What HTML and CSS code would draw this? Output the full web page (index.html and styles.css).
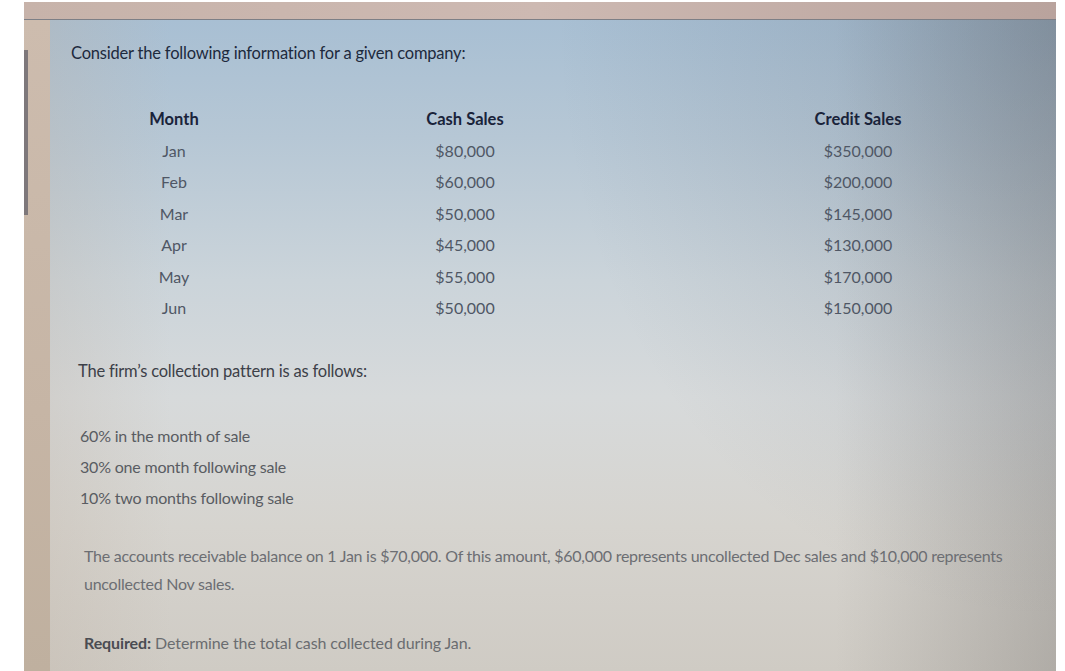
FILE: index.html
```html
<!DOCTYPE html>
<html>
<head>
<meta charset="utf-8">
<link rel="stylesheet" href="styles.css">
</head>
<body>
<div class="photo">
  <div class="bezel-top"></div>
  <div class="body-row">
    <div class="bezel-left"><div class="edge"></div></div>
    <div class="screen">
      <p class="title">Consider the following information for a given company:</p>
      <div class="table">
        <div class="th">Month</div><div class="th">Cash Sales</div><div class="th">Credit Sales</div>
        <div class="td">Jan</div><div class="td">$80,000</div><div class="td">$350,000</div>
        <div class="td">Feb</div><div class="td">$60,000</div><div class="td">$200,000</div>
        <div class="td">Mar</div><div class="td">$50,000</div><div class="td">$145,000</div>
        <div class="td">Apr</div><div class="td">$45,000</div><div class="td">$130,000</div>
        <div class="td">May</div><div class="td">$55,000</div><div class="td">$170,000</div>
        <div class="td">Jun</div><div class="td">$50,000</div><div class="td">$150,000</div>
      </div>
      <p class="pattern">The firm’s collection pattern is as follows:</p>
      <ul class="pct">
        <li>60% in the month of sale</li>
        <li>30% one month following sale</li>
        <li>10% two months following sale</li>
      </ul>
      <p class="ar">The accounts receivable balance on 1 Jan is $70,000. Of this amount, $60,000 represents uncollected Dec sales and $10,000 represents uncollected Nov sales.</p>
      <p class="req"><b>Required:</b> Determine the total cash collected during Jan.</p>
    </div>
  </div>
</div>
</body>
</html>
```

FILE: styles.css
```css
html, body {
  margin: 0;
  padding: 0;
  background: #ffffff;
}
body {
  font-family: Lato, "Open Sans", sans-serif;
}
.photo {
  margin: 2px 0 0 24px;
  width: 1032px;
  height: 669px;
  display: flex;
  flex-direction: column;
  overflow: hidden;
}
.bezel-top {
  height: 17px;
  flex: none;
  background: linear-gradient(to right, #c7b3aa, #cdb9b2 50%, #b9a39d);
  border-bottom: 1px solid #7d7f86;
}
.body-row {
  flex: 1;
  display: flex;
  min-height: 0;
}
.bezel-left {
  width: 26px;
  flex: none;
  background: linear-gradient(to bottom, #cdbcae, #c6b5a5 60%, #bfb09f);
  padding-top: 30px;
}
.edge {
  width: 4px;
  height: 165px;
  background: #7e787b;
}
.screen {
  flex: 1;
  padding: 23px 0 0 21px;
  background:
    radial-gradient(ellipse 500px 600px at 100% 0%, rgba(80,90,105,0.28), rgba(80,90,105,0.12) 45%, rgba(80,90,105,0) 100%),
    linear-gradient(to right, rgba(0,0,0,0) 78%, rgba(95,92,90,0.28) 100%),
    linear-gradient(to right, rgba(190,175,160,0.25) 0%, rgba(0,0,0,0) 12%),
    linear-gradient(to bottom, #a8bfd3 0%, #b6c7d5 18%, #cbd4da 40%, #d7dadb 58%, #d6d4cf 78%, #cfcbc4 100%);
}
p { margin: 0; }
.title {
  font-size: 16.5px;
  line-height: 20px;
  color: #1d2a3d;
  letter-spacing: -0.2px;
}
.table {
  display: grid;
  grid-template-columns: 148px 434px 352px;
  grid-template-rows: 33px;
  grid-auto-rows: 31.4px;
  margin: 39px 0 0 29px;
  text-align: center;
  align-items: start;
}
.th {
  font-weight: 700;
  font-size: 16.5px;
  line-height: 34px;
  color: #19233a;
}
.td {
  font-size: 16px;
  line-height: 31px;
  color: #4f5765;
}
.pattern {
  margin: 38px 0 0 7px;
  font-size: 16.5px;
  line-height: 20px;
  color: #3c4048;
  letter-spacing: -0.2px;
}
.pct {
  list-style: none;
  margin: 45px 0 0 9px;
  padding: 0;
  font-size: 16px;
  color: #595c62;
  letter-spacing: -0.2px;
}
.pct li {
  height: 31px;
  line-height: 20px;
}
.ar {
  margin: 23px 0 0 13px;
  width: 950px;
  font-size: 16px;
  line-height: 28px;
  color: #6c6e73;
  letter-spacing: -0.25px;
}
.req {
  margin: 35px 0 0 13px;
  font-size: 16px;
  line-height: 20px;
  color: #6a6c70;
  letter-spacing: -0.1px;
}
.req b {
  color: #4a4c52;
}
```
